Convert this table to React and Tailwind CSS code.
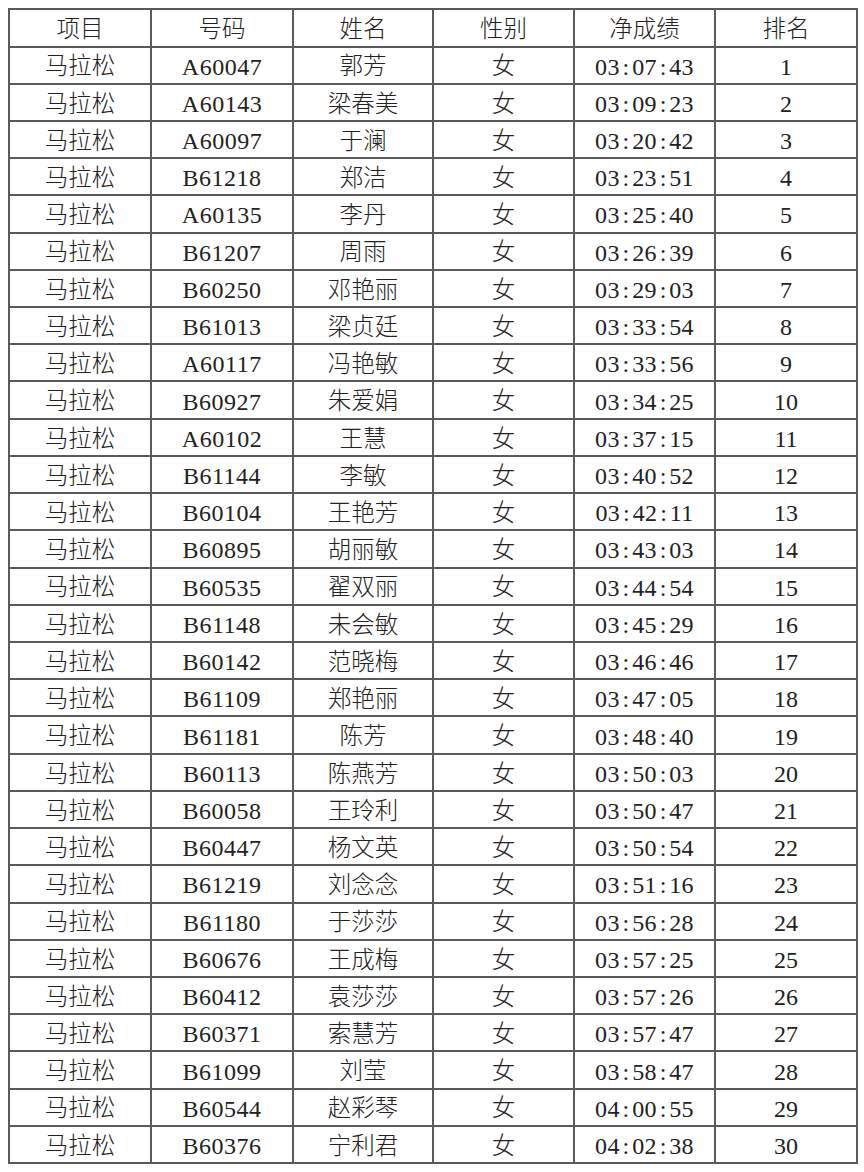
const rows = [
  ["A60047","郭芳","03:07:43"],
  ["A60143","梁春美","03:09:23"],
  ["A60097","于澜","03:20:42"],
  ["B61218","郑洁","03:23:51"],
  ["A60135","李丹","03:25:40"],
  ["B61207","周雨","03:26:39"],
  ["B60250","邓艳丽","03:29:03"],
  ["B61013","梁贞廷","03:33:54"],
  ["A60117","冯艳敏","03:33:56"],
  ["B60927","朱爱娟","03:34:25"],
  ["A60102","王慧","03:37:15"],
  ["B61144","李敏","03:40:52"],
  ["B60104","王艳芳","03:42:11"],
  ["B60895","胡丽敏","03:43:03"],
  ["B60535","翟双丽","03:44:54"],
  ["B61148","未会敏","03:45:29"],
  ["B60142","范晓梅","03:46:46"],
  ["B61109","郑艳丽","03:47:05"],
  ["B61181","陈芳","03:48:40"],
  ["B60113","陈燕芳","03:50:03"],
  ["B60058","王玲利","03:50:47"],
  ["B60447","杨文英","03:50:54"],
  ["B61219","刘念念","03:51:16"],
  ["B61180","于莎莎","03:56:28"],
  ["B60676","王成梅","03:57:25"],
  ["B60412","袁莎莎","03:57:26"],
  ["B60371","索慧芳","03:57:47"],
  ["B61099","刘莹","03:58:47"],
  ["B60544","赵彩琴","04:00:55"],
  ["B60376","宁利君","04:02:38"],
];

function Time({ t }) {
  const parts = t.split(":");
  return (
    <span className="inline-flex items-baseline">
      {parts.map((p, i) => (
        <span key={i} className="inline-flex items-baseline">
          {i > 0 && <span className="inline-block w-[12.5px] text-center">:</span>}
          <span className="tracking-[0.3px]">{p}</span>
        </span>
      ))}
    </span>
  );
}

const cell = "border-2 border-[#5a5a5a] text-center align-middle p-0 pt-[3px] leading-none";
const zh = "font-light text-[23.5px]";

export default function App() {
  return (
    <div
      className="bg-white w-[864px] h-[1172px] pt-[8px] pl-[8px] text-[#222222] text-[24px]"
      style={{ fontFamily: '"Liberation Serif", "Noto Sans CJK SC", serif' }}
    >
      <table className="border-collapse table-fixed w-[848px]">
        <colgroup>
          <col className="w-[142px]" />
          <col className="w-[142px]" />
          <col className="w-[140px]" />
          <col className="w-[141px]" />
          <col className="w-[141px]" />
          <col className="w-[142px]" />
        </colgroup>
        <thead>
          <tr className="h-[37.5px]">
            {["项目","号码","姓名","性别","净成绩","排名"].map((h) => (
              <th key={h} className={cell + " font-normal"}><span className={zh}>{h}</span></th>
            ))}
          </tr>
        </thead>
        <tbody>
          {rows.map((r, i) => (
            <tr key={r[0]} className="h-[37.23px]">
              <td className={cell}><span className={zh}>马拉松</span></td>
              <td className={cell}><span className="tracking-[0.5px]">{r[0]}</span></td>
              <td className={cell}><span className={zh}>{r[1]}</span></td>
              <td className={cell}><span className={zh}>女</span></td>
              <td className={cell}><Time t={r[2]} /></td>
              <td className={cell}>{i + 1}</td>
            </tr>
          ))}
        </tbody>
      </table>
    </div>
  );
}
